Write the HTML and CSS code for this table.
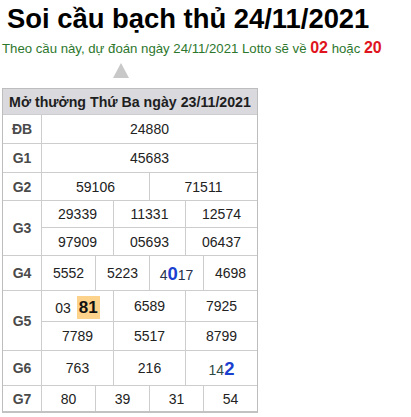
FILE: index.html
```html
<!DOCTYPE html>
<html lang="vi">
<head>
<meta charset="utf-8">
<title>Soi cầu bạch thủ 24/11/2021</title>
<link rel="stylesheet" href="styles.css">
</head>
<body>
<div class="page">
  <h1 class="title">Soi cầu bạch thủ 24/11/2021</h1>
  <p class="lead">Theo cầu này, dự đoán ngày 24/11/2021 Lotto sẽ về <b class="hot">02</b> hoặc <b class="hot">20</b></p>
  <div class="arrow"></div>
  <div class="board">
    <div class="cap">Mở thưởng Thứ Ba ngày 23/11/2021</div>

    <div class="lbl">ĐB</div>
    <div class="num s12">24880</div>

    <div class="lbl">G1</div>
    <div class="num s12">45683</div>

    <div class="lbl">G2</div>
    <div class="num s6">59106</div>
    <div class="num s6">71511</div>

    <div class="lbl r2">G3</div>
    <div class="num s4">29339</div>
    <div class="num s4">11331</div>
    <div class="num s4">12574</div>
    <div class="num s4">97909</div>
    <div class="num s4">05693</div>
    <div class="num s4">06437</div>

    <div class="lbl">G4</div>
    <div class="num s3">5552</div>
    <div class="num s3">5223</div>
    <div class="num s3"><span class="run"><span class="dim">4</span><b class="pick">0</b><span class="dim">17</span></span></div>
    <div class="num s3">4698</div>

    <div class="lbl r2">G5</div>
    <div class="num s4"><span class="run">03 <b class="mark">81</b></span></div>
    <div class="num s4">6589</div>
    <div class="num s4">7925</div>
    <div class="num s4">7789</div>
    <div class="num s4">5517</div>
    <div class="num s4">8799</div>

    <div class="lbl">G6</div>
    <div class="num s4">763</div>
    <div class="num s4">216</div>
    <div class="num s4"><span class="run"><span class="slate">14</span><b class="pick">2</b></span></div>

    <div class="lbl">G7</div>
    <div class="num s3">80</div>
    <div class="num s3">39</div>
    <div class="num s3">31</div>
    <div class="num s3">54</div>
  </div>
</div>
</body>
</html>
```

FILE: styles.css
```css
html, body {
  margin: 0;
  padding: 0;
  background: #ffffff;
}

body {
  font-family: "Liberation Sans", Arial, sans-serif;
  color: #222222;
}

.page {
  padding-left: 2px;
}

.title {
  margin: 3px 0 0 5px;
  font-size: 27.4px;
  line-height: 32px;
  font-weight: 700;
  color: #000000;
}

.lead {
  margin: 3px 0 0 0;
  font-size: 13.2px;
  line-height: 20px;
  color: #2d772d;
  white-space: nowrap;
}

.hot {
  font-size: 16px;
  font-weight: 700;
  color: #e0141e;
}

.arrow {
  width: 0;
  height: 0;
  margin: 4px 0 0 111px;
  border-left: 8px solid transparent;
  border-right: 8px solid transparent;
  border-bottom: 15px solid #c8c8c8;
}

.board {
  box-sizing: border-box;
  width: 256px;
  margin-top: 10px;
  display: grid;
  grid-template-columns: 38px repeat(12, 1fr);
  grid-template-rows: 25px 28px 28px 27px 26px 27px 34px 30px 28px 34px 25px;
  gap: 1px;
  background: #cdcdcd;
  border: 1px solid #bdbdbd;
  border-bottom: 2px solid #c2c2c2;
}

.board > div {
  background: #ffffff;
  display: flex;
  align-items: center;
  justify-content: center;
  white-space: nowrap;
}

.board > .cap {
  grid-column: 1 / -1;
  background: #d9d9de;
  font-size: 14.2px;
  font-weight: 700;
  color: #1e1e1e;
}

.lbl {
  font-size: 14px;
  font-weight: 700;
  color: #4a4a4a;
}

.r2 {
  grid-row: span 2;
}

.num {
  font-size: 14px;
  color: #222222;
}

.s12 { grid-column: span 12; }
.s6 { grid-column: span 6; }
.s4 { grid-column: span 4; }
.s3 { grid-column: span 3; }

.run {
  display: inline-block;
  position: relative;
  top: 1px;
}

.dim {
  color: #27314a;
}

.slate {
  color: #2f4a45;
}

.pick {
  font-size: 18.5px;
  font-weight: 700;
  color: #1b3fcf;
}

.mark {
  display: inline-block;
  margin-left: 2px;
  padding: 0 2px;
  line-height: 23px;
  font-size: 17px;
  font-weight: 700;
  color: #111111;
  background: #fdd28a;
}
```
